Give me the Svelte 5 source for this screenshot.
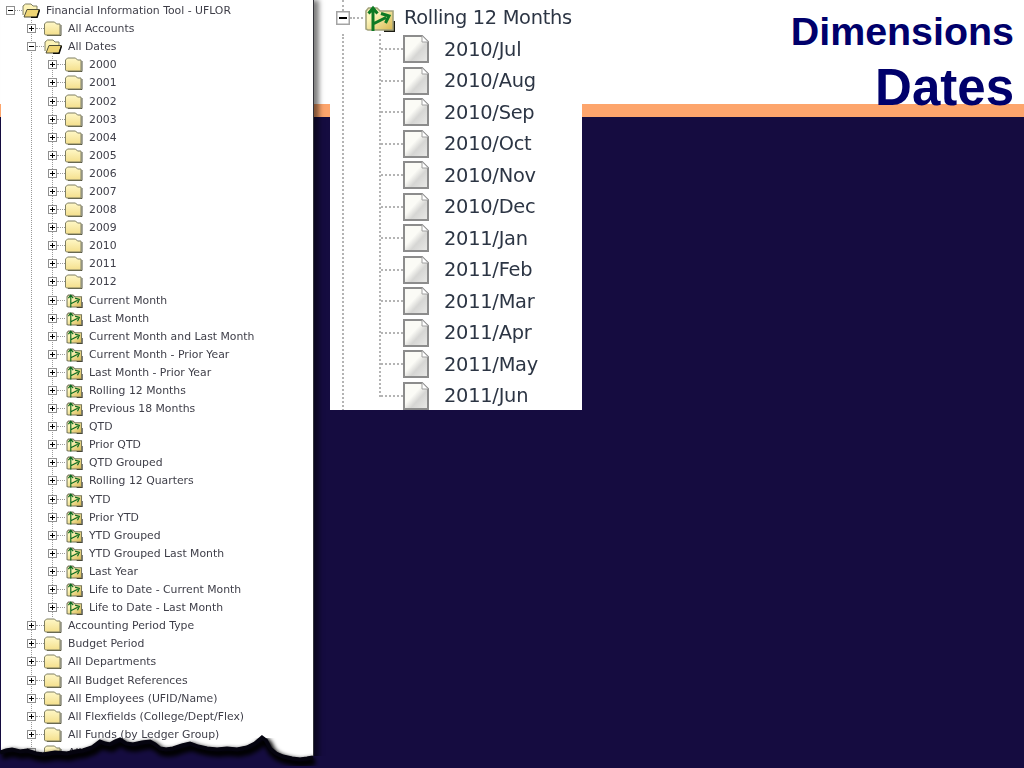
<script>
	const years = [2000, 2001, 2002, 2003, 2004, 2005, 2006, 2007, 2008, 2009, 2010, 2011, 2012];
	const calcs = [
		'Current Month', 'Last Month', 'Current Month and Last Month', 'Current Month - Prior Year',
		'Last Month - Prior Year', 'Rolling 12 Months', 'Previous 18 Months', 'QTD', 'Prior QTD',
		'QTD Grouped', 'Rolling 12 Quarters', 'YTD', 'Prior YTD', 'YTD Grouped',
		'YTD Grouped Last Month', 'Last Year', 'Life to Date - Current Month', 'Life to Date - Last Month'
	];
	const others = [
		'Accounting Period Type', 'Budget Period', 'All Departments', 'All Budget References',
		'All Employees (UFID/Name)', 'All Flexfields (College/Dept/Flex)', 'All Funds (by Ledger Group)', 'All Grants'
	];
	const periods = [
		'2010/Jul', '2010/Aug', '2010/Sep', '2010/Oct', '2010/Nov', '2010/Dec',
		'2011/Jan', '2011/Feb', '2011/Mar', '2011/Apr', '2011/May', '2011/Jun'
	];

	// torn paper edge of the left screenshot, in page pixels
	const tear = [
		[0, 751], [6, 749], [12, 748], [20, 750], [27, 749], [36, 752], [43, 753], [55, 751], [67, 752], [75, 750],
		[83, 749], [92, 746], [100, 740], [105, 742], [110, 743], [115, 740], [120, 738], [126, 742], [133, 743],
		[142, 741], [150, 740], [155, 743], [160, 747], [166, 748], [173, 747], [182, 744], [190, 742], [198, 745],
		[207, 747], [217, 748], [227, 747], [237, 748], [247, 746], [255, 742], [262, 736], [266, 739], [270, 747],
		[276, 752], [283, 755], [292, 757], [300, 758], [307, 757], [313, 756]
	];
	const tearLine = tear.map((p) => p.join(',')).join(' ');
	const tearFill = `${tearLine} 340,756 340,768 0,768`;
</script>

{#snippet expander(open)}
	<span class="expander">
		<svg viewBox="0 0 9 9">
			<rect x="0.5" y="0.5" width="8" height="8" fill="#fff" stroke="#8f8f8f" />
			<path d="M2 4.5H7" stroke="#000" />
			{#if !open}<path d="M4.5 2V7" stroke="#000" />{/if}
		</svg>
	</span>
{/snippet}

{#snippet folder()}
	<svg class="icon" viewBox="0 0 18 15">
		<path d="M17 4V14.5H3" fill="none" stroke="#55553f" />
		<path d="M0.5 13V3L2.5 1H10.5L12.5 3H16V14H1.5Z" fill="url(#leaf)" stroke="#7f7f62" />
	</svg>
{/snippet}

{#snippet openFolder()}
	<svg class="icon" viewBox="0 0 18 15">
		<path d="M1 12V3L3.5 1H9L11 3H15V7" fill="#fdf3b6" stroke="#7f7f62" />
		<path d="M2 14L5 6.5H17.5L15 14Z" fill="#efd574" stroke="#4e4e38" />
		<path d="M17.5 7L15 14.5H9" fill="none" stroke="#0c0c08" stroke-width="1.5" />
	</svg>
{/snippet}

{#snippet calcFolder()}
	<svg class="icon calc" viewBox="0 0 32 28">
		<path d="M31 17V27H21" fill="none" stroke="#1a1a12" stroke-width="2" />
		<path class="shell" d="M3 25V7L5.5 4H14L17 7H30V26H5Z" fill="url(#gold)" stroke="#a3a37c" stroke-width="1.6" />
		<path class="arrows" d="M10 27V5M5.5 9.5L10 4L14.5 9.5M10 20L23 13.5M18 9.5L26 12L22.5 19" fill="none" stroke="#0d7a24" stroke-width="3" />
	</svg>
{/snippet}

{#snippet page()}
	<svg class="icon page" viewBox="0 0 26 28">
		<path d="M1 1H19L25 7V27H1Z" fill="url(#sheet)" stroke="#8c8c8c" stroke-width="2" />
		<path d="M19 1V7H25" fill="#fff" stroke="#a0a0a0" />
	</svg>
{/snippet}

<div class="slide">
	<svg class="defs" width="0" height="0">
		<defs>
			<linearGradient id="leaf" x1="0" y1="0" x2="0" y2="1">
				<stop offset="0" stop-color="#fff8c8" />
				<stop offset="1" stop-color="#f4df8c" />
			</linearGradient>
			<linearGradient id="gold" x1="0" y1="0" x2="1" y2="1">
				<stop offset="0.3" stop-color="#fcf5bb" />
				<stop offset="1" stop-color="#d8b64e" />
			</linearGradient>
			<linearGradient id="sheet" x1="0" y1="0" x2="1" y2="1">
				<stop offset="0.42" stop-color="#fbfbf6" />
				<stop offset="0.62" stop-color="#d6d6d4" />
				<stop offset="1" stop-color="#eaeae8" />
			</linearGradient>
		</defs>
	</svg>

	<header>
		<h1>Dimensions</h1>
		<h2>Dates</h2>
	</header>
	<div class="stripe"></div>
	<div class="body"></div>

	<section class="panel tree">
		<div class="row root">
			{@render expander(true)}<i class="dash"></i>{@render openFolder()}
			<span>Financial Information Tool - UFLOR</span>
		</div>
		<ul class="branch">
			<li class="row">
				{@render expander(false)}<i class="dash"></i>{@render folder()}
				<span>All Accounts</span>
			</li>
			<li>
				<div class="row">
					{@render expander(true)}<i class="dash"></i>{@render openFolder()}
					<span>All Dates</span>
				</div>
				<ul class="branch inner">
					{#each years as year}
						<li class="row">
							{@render expander(false)}<i class="dash"></i>{@render folder()}
							<span>{year}</span>
						</li>
					{/each}
					{#each calcs as name}
						<li class="row">
							{@render expander(false)}<i class="dash"></i>{@render calcFolder()}
							<span>{name}</span>
						</li>
					{/each}
				</ul>
			</li>
			{#each others as name}
				<li class="row">
					{@render expander(false)}<i class="dash"></i>{@render folder()}
					<span>{name}</span>
				</li>
			{/each}
		</ul>
	</section>

	<svg class="torn" viewBox="0 0 340 768">
		<defs>
			<filter id="soft" x="-10%" y="-10%" width="120%" height="120%">
				<feGaussianBlur stdDeviation="2.2" />
			</filter>
		</defs>
		<polygon points={tearFill} fill="#150c40" />
		<polyline points={tearLine} transform="translate(2 5)" fill="none" stroke="#000" stroke-width="8" filter="url(#soft)" />
		<polyline points={tearLine} transform="translate(0 1.5)" fill="none" stroke="#05040f" stroke-width="4" />
	</svg>

	<section class="panel detail">
		<div class="guide-top"></div>
		<div class="row head">
			<span class="expander big">
				<svg viewBox="0 0 14 14">
					<rect x="0.75" y="0.75" width="12.5" height="12.5" fill="#fff" stroke="#a4a4a4" stroke-width="1.5" />
					<path d="M3 7H11" stroke="#000" stroke-width="2" />
				</svg>
			</span>
			<i class="dash"></i>{@render calcFolder()}
			<span>Rolling 12 Months</span>
		</div>
		<div class="outer-guide">
			<ul class="periods">
				{#each periods as period}
					<li class="row">
						<i class="dash"></i>{@render page()}
						<span>{period}</span>
					</li>
				{/each}
			</ul>
		</div>
	</section>
</div>

<style>
	:global(body) {
		background: #150c40;
	}

	ul {
		list-style: none;
		margin: 0;
		padding: 0;
	}

	.slide {
		position: relative;
		width: 1024px;
		height: 768px;
		overflow: hidden;
		display: flex;
		flex-direction: column;
		font-family: "DejaVu Sans", sans-serif;
	}

	.defs {
		position: absolute;
	}

	header {
		height: 104px;
		background: #fff;
		display: flex;
		flex-direction: column;
		align-items: flex-end;
		padding-right: 10px;
		box-sizing: border-box;
		font-family: "Liberation Sans", Arial, sans-serif;
		color: #00006b;
		position: relative;
		z-index: 1;
	}

	h1,
	h2 {
		margin: 0;
		font-weight: 700;
		white-space: nowrap;
	}

	h1 {
		font-size: 39.4px;
		line-height: 40px;
		margin-top: 11px;
	}

	h2 {
		font-size: 51px;
		line-height: 54px;
		margin-top: 10px;
	}

	.stripe {
		height: 13px;
		background: #fda56c;
	}

	.body {
		flex: 1;
		background: #150c40;
	}

	.panel {
		position: absolute;
		top: 0;
		background: #fff;
		z-index: 2;
	}

	.tree {
		left: 1px;
		width: 312px;
		height: 768px;
		padding: 1.5px 0 0 5px;
		box-sizing: border-box;
		font-size: 10.85px;
		color: #3e3e48;
		box-shadow: 1px 0 0 #33333a, 6px 0 5px rgba(0, 0, 0, 0.5);
	}

	.row {
		display: flex;
		align-items: center;
		height: 18.1px;
		white-space: nowrap;
	}

	.tree .row > span:last-child {
		margin-left: 6px;
		filter: blur(0.3px);
	}

	.tree .shell {
		stroke: #77775c;
		stroke-width: 2;
	}

	.tree .arrows {
		stroke-width: 2.2;
		stroke: #0b6a1e;
	}

	.branch {
		margin-left: 25px;
		border-left: 1px dotted #9a9a9a;
	}

	.branch .row {
		margin-left: -5px;
	}

	.inner {
		margin-left: 20px;
	}

	.branch > li:last-child {
		position: relative;
	}

	.inner > li:last-child::before {
		content: "";
		position: absolute;
		left: -1px;
		top: 10px;
		bottom: 0;
		width: 1px;
		background: #fff;
	}

	.expander {
		flex: none;
		display: block;
		width: 9px;
		height: 9px;
		line-height: 0;
		background: #fff;
	}

	.expander svg {
		display: block;
		width: 100%;
		height: 100%;
	}

	.dash {
		flex: none;
		width: 8px;
		border-top: 1px dotted #9a9a9a;
	}

	.root .dash {
		width: 7px;
	}

	.icon {
		flex: none;
		display: block;
		width: 18px;
		height: 15px;
	}

	.detail {
		left: 330px;
		width: 252px;
		height: 410px;
		overflow: hidden;
		font-size: 19.4px;
		letter-spacing: -0.25px;
		color: #2c3544;
	}

	.guide-top {
		position: absolute;
		left: 12px;
		top: 0;
		height: 11px;
		border-left: 2px dotted #b4b4b4;
	}

	.detail .row {
		height: 31.5px;
		filter: blur(0.4px);
	}

	.head {
		padding-left: 6px;
		margin-top: 2.2px;
	}

	.expander.big {
		width: 14px;
		height: 14px;
	}

	.head .dash {
		width: 13px;
		border-top: 2px dotted #b4b4b4;
	}

	.head .icon {
		width: 32px;
		height: 28px;
	}

	.head span:last-child {
		margin-left: 9px;
		letter-spacing: -0.32px;
	}

	.outer-guide {
		margin-left: 12px;
		border-left: 2px dotted #b4b4b4;
		height: 400px;
	}

	.periods {
		margin-left: 35px;
		border-left: 2px dotted #b4b4b4;
		height: 363px;
	}

	.periods .dash {
		width: 22px;
		border-top: 2px dotted #b4b4b4;
	}

	.periods .icon {
		width: 26px;
		height: 28px;
	}

	.periods span:last-child {
		margin-left: 15px;
	}

	.torn {
		position: absolute;
		left: 0;
		top: 0;
		width: 340px;
		height: 768px;
		z-index: 3;
		pointer-events: none;
	}
</style>
